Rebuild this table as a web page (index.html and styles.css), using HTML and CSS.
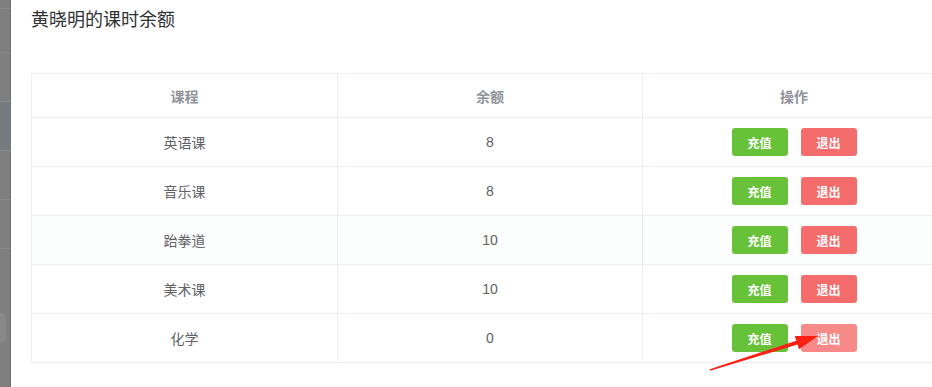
FILE: index.html
```html
<!DOCTYPE html>
<html lang="zh-CN">
<head>
  <meta charset="UTF-8">
  <meta name="viewport" content="width=device-width, initial-scale=1.0">
  <title>课时余额</title>
  <link rel="stylesheet" href="styles.css">
</head>
<body>
  <!-- page behind the dialog, dimmed by the mask -->
  <div class="backdrop">
    <div class="bd-row" style="height: 9px"></div>
    <div class="bd-row" style="height: 44px"></div>
    <div class="bd-row" style="height: 49px"></div>
    <div class="bd-row active" style="height: 49px"></div>
    <div class="bd-row" style="height: 49px"></div>
    <div class="bd-row" style="height: 49px"></div>
    <div class="bd-chip"></div>
  </div>

  <div class="dialog">
    <div class="dialog-header">
      <span class="dialog-title">黄晓明的课时余额</span>
    </div>

    <table class="course-table">
      <colgroup>
        <col style="width: 306px">
        <col style="width: 305px">
        <col style="width: 303px">
      </colgroup>
      <thead>
        <tr>
          <th>课程</th>
          <th>余额</th>
          <th>操作</th>
        </tr>
      </thead>
      <tbody id="rows"></tbody>
    </table>
  </div>

  <svg class="pointer-arrow" width="932" height="387" viewBox="0 0 932 387">
    <polygon points="710.2,370.8 797.5,344.5 799,349.3 818,336 794.8,335.9 796.3,340.7 709.8,369.2" fill="#fb1f14"/>
  </svg>

  <script>
    const courses = [
      { name: '英语课', balance: 8 },
      { name: '音乐课', balance: 8 },
      { name: '跆拳道', balance: 10 },
      { name: '美术课', balance: 10 },
      { name: '化学', balance: 0 }
    ];

    const tbody = document.getElementById('rows');
    courses.forEach((c, i) => {
      const tr = document.createElement('tr');
      if (i === 2) tr.className = 'hover-row';
      // the last row's quit button is under the cursor
      const quitCls = i === courses.length - 1 ? 'btn btn-danger hover' : 'btn btn-danger';
      tr.innerHTML = `
        <td>${c.name}</td>
        <td>${c.balance}</td>
        <td>
          <div class="actions">
            <button class="btn btn-success">充值</button>
            <button class="${quitCls}">退出</button>
          </div>
        </td>
      `;
      tbody.appendChild(tr);
    });
  </script>
</body>
</html>
```

FILE: styles.css
```css
* {
  margin: 0;
  padding: 0;
  box-sizing: border-box;
}

body {
  width: 932px;
  height: 387px;
  overflow: hidden;
  display: flex;
  background: #fff;
  font-family: "Liberation Sans", "Noto Sans CJK SC", sans-serif;
  color: #606266;
  position: relative;
}

/* dimmed page strip on the left */
.backdrop {
  width: 11px;
  flex-shrink: 0;
  background: #7f7f7f;
  box-shadow: inset -1px 0 0 #6f6f6f;
  display: flex;
  flex-direction: column;
}

.bd-row {
  border-bottom: 1px solid #8a8a8a;
}

.bd-row.active {
  background: #737a80;
}

.bd-chip {
  margin-top: 64px;
  width: 6px;
  height: 29px;
  background: #888;
  border-radius: 0 4px 4px 0;
}

.dialog {
  flex: 1;
  padding-left: 20px;
  min-width: 0;
}

.dialog-header {
  padding-top: 8px;
  height: 73px;
}

.dialog-title {
  font-size: 18px;
  line-height: 24px;
  color: #303133;
}

.course-table {
  width: 914px;
  border-collapse: collapse;
  table-layout: fixed;
  font-size: 14px;
}

.course-table th,
.course-table td {
  border: 1px solid #ebeef5;
  text-align: center;
}

.course-table th {
  height: 44px;
  color: #909399;
  font-weight: bold;
}

.course-table td {
  height: 49px;
  color: #606266;
}

.course-table tr.hover-row td {
  background: #fcfdfd;
}

.actions {
  display: flex;
  justify-content: center;
  gap: 13px;
}

.btn {
  width: 56px;
  height: 28px;
  border: none;
  border-radius: 3px;
  color: #fff;
  font-size: 12px;
  font-weight: bold;
  font-family: inherit;
  cursor: pointer;
}

.btn-success {
  background: #67c23a;
}

.btn-danger {
  background: #f56c6c;
}

.btn-danger.hover {
  background: #f78989;
}

.pointer-arrow {
  position: absolute;
  left: 0;
  top: 0;
  pointer-events: none;
}
```
